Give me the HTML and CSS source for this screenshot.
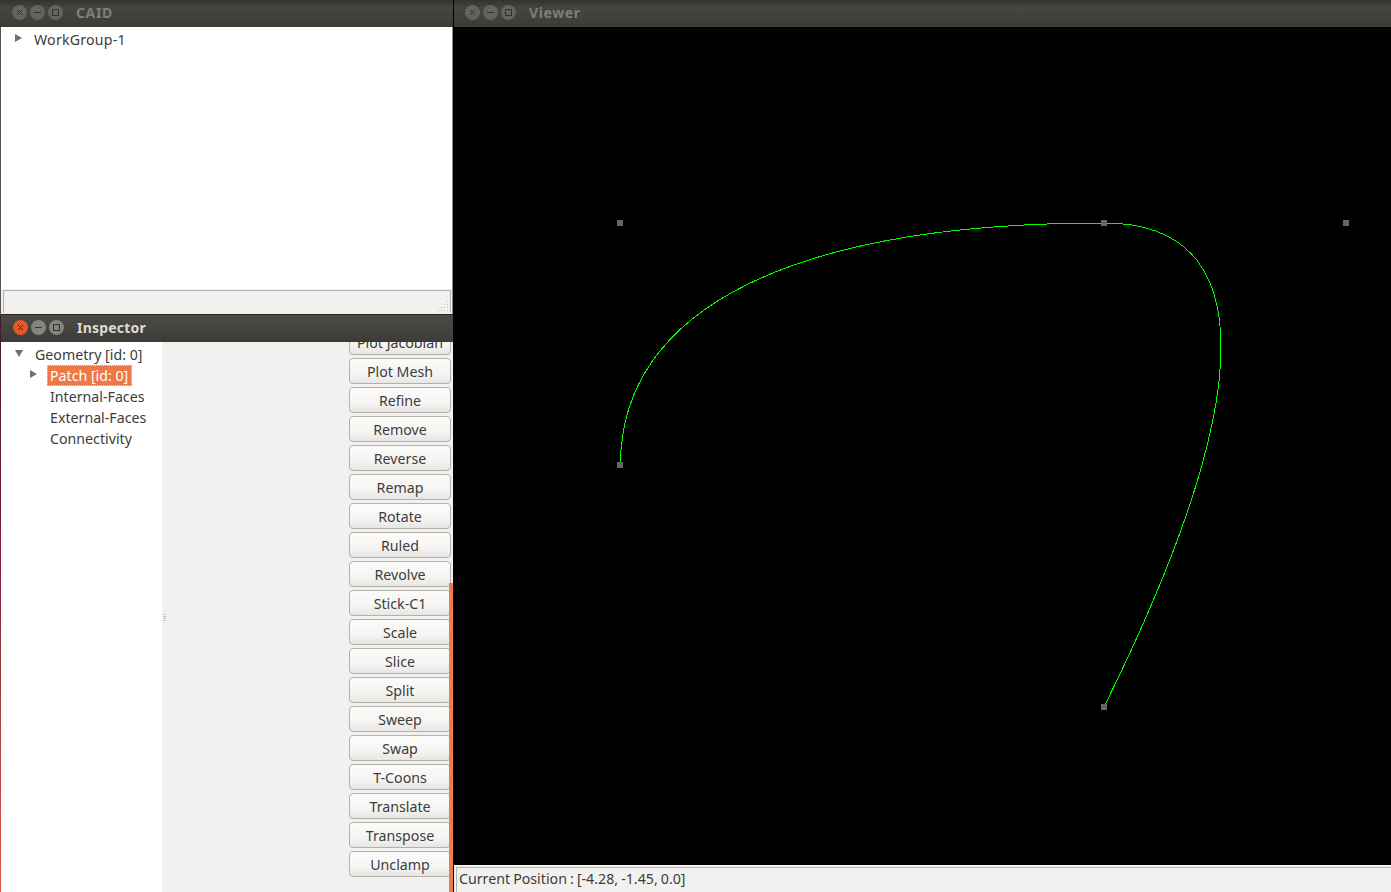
FILE: index.html
```html
<!DOCTYPE html>
<html>
<head>
    <title>CAID</title>
    <link rel="stylesheet" href="styles.css">
</head>
<body>
    <div class="window caid-window">
        <div class="titlebar">
            <div class="win-buttons">
                <svg class="win-btn" viewBox="0 0 15 15"><circle cx="7.5" cy="7.5" r="7.5"/><path d="M5 5l5 5M10 5l-5 5"/></svg>
                <svg class="win-btn" viewBox="0 0 15 15"><circle cx="7.5" cy="7.5" r="7.5"/><path d="M4 7.5h7"/></svg>
                <svg class="win-btn" viewBox="0 0 15 15"><circle cx="7.5" cy="7.5" r="7.5"/><rect x="4.5" y="4.5" width="6" height="6"/></svg>
            </div>
            <span class="win-title">CAID</span>
        </div>
        <div class="tree workspace-tree">
            <div class="tree-row"><span class="arrow closed"></span><span class="label">WorkGroup-1</span></div>
        </div>
        <div class="status-strip">
            <div class="status-field"></div>
            <svg class="grip" viewBox="0 0 12 12"><path d="M10 1h1v1h-1zM10 4h1v1h-1zM7 4h1v1h-1zM10 7h1v1h-1zM7 7h1v1h-1zM4 7h1v1h-1zM10 10h1v1h-1zM7 10h1v1h-1zM4 10h1v1h-1zM1 10h1v1h-1z"/></svg>
        </div>
    </div>

    <div class="window inspector-window active">
        <div class="titlebar">
            <div class="win-buttons">
                <svg class="win-btn close" viewBox="0 0 15 15"><circle cx="7.5" cy="7.5" r="7.5"/><path d="M5 5l5 5M10 5l-5 5"/></svg>
                <svg class="win-btn" viewBox="0 0 15 15"><circle cx="7.5" cy="7.5" r="7.5"/><path d="M4 7.5h7"/></svg>
                <svg class="win-btn" viewBox="0 0 15 15"><circle cx="7.5" cy="7.5" r="7.5"/><rect x="4.5" y="4.5" width="6" height="6"/></svg>
            </div>
            <span class="win-title">Inspector</span>
        </div>
        <div class="inspector-body">
            <div class="tree inspector-tree">
                <div class="tree-row"><span class="arrow open"></span><span class="label">Geometry [id: 0]</span></div>
                <div class="tree-row indent"><span class="arrow closed"></span><span class="label selected">Patch [id: 0]</span></div>
                <div class="tree-row leaf"><span class="label">Internal-Faces</span></div>
                <div class="tree-row leaf"><span class="label">External-Faces</span></div>
                <div class="tree-row leaf"><span class="label">Connectivity</span></div>
            </div>
            <div class="splitter"><span></span></div>
            <div class="actions">
                <div class="button-list">
                    <button>Plot Jacobian</button>
                    <button>Plot Mesh</button>
                    <button>Refine</button>
                    <button>Remove</button>
                    <button>Reverse</button>
                    <button>Remap</button>
                    <button>Rotate</button>
                    <button>Ruled</button>
                    <button>Revolve</button>
                    <button>Stick-C1</button>
                    <button>Scale</button>
                    <button>Slice</button>
                    <button>Split</button>
                    <button>Sweep</button>
                    <button>Swap</button>
                    <button>T-Coons</button>
                    <button>Translate</button>
                    <button>Transpose</button>
                    <button>Unclamp</button>
                </div>
            </div>
            <div class="edge-strip"></div>
        </div>
    </div>

    <div class="window viewer-window">
        <div class="titlebar">
            <div class="win-buttons">
                <svg class="win-btn" viewBox="0 0 15 15"><circle cx="7.5" cy="7.5" r="7.5"/><path d="M5 5l5 5M10 5l-5 5"/></svg>
                <svg class="win-btn" viewBox="0 0 15 15"><circle cx="7.5" cy="7.5" r="7.5"/><path d="M4 7.5h7"/></svg>
                <svg class="win-btn" viewBox="0 0 15 15"><circle cx="7.5" cy="7.5" r="7.5"/><rect x="4.5" y="4.5" width="6" height="6"/></svg>
            </div>
            <span class="win-title">Viewer</span>
        </div>
        <div class="canvas">
            <svg class="plot" viewBox="454 27 937 838">
                <path class="curve" d="M620.5 465 C620.5 309 792 223 1104 223 C1260 223 1260 392 1104 707"/>
                <rect class="ctrl" x="617" y="462" width="6" height="6"/>
                <rect class="ctrl" x="617" y="220" width="6" height="6"/>
                <rect class="ctrl" x="1101" y="220" width="6" height="6"/>
                <rect class="ctrl" x="1343" y="220" width="6" height="6"/>
                <rect class="ctrl" x="1101" y="704" width="6" height="6"/>
            </svg>
        </div>
        <div class="viewer-status">
            <div class="position">Current Position : [-4.28, -1.45, 0.0]</div>
        </div>
    </div>
</body>
</html>
```

FILE: styles.css
```css
html, body {
    margin: 0;
    padding: 0;
    height: 100%;
    overflow: hidden;
}

body {
    position: relative;
    background: linear-gradient(#3c1a30 35%, #7a1f3a 60%, #dc5a48);
    font-family: "Noto Sans", "Open Sans", sans-serif;
    font-size: 14.2px;
    color: #3c3c3c;
}

.window {
    position: absolute;
    display: flex;
    flex-direction: column;
    box-sizing: border-box;
}

.caid-window {
    left: 0;
    top: 0;
    width: 453px;
    height: 315px;
    border-left: 1px solid #555;
    border-right: 1px solid #8a8984;
}

.inspector-window {
    left: 1px;
    top: 314px;
    width: 452px;
    height: 578px;
    background: #f2f1f0;
}

.viewer-window {
    left: 453px;
    top: 0;
    width: 938px;
    height: 892px;
    border-left: 1px solid #000;
}

.titlebar {
    flex: none;
    display: flex;
    align-items: center;
    height: 27px;
    box-sizing: border-box;
    padding-bottom: 2px;
    background: linear-gradient(#33322e, #464540 30%, #3c3b37);
}

.caid-window .titlebar {
    margin: 0 -1px;
    padding-left: 12px;
}

.viewer-window .titlebar {
    padding-left: 11px;
}

.inspector-window .titlebar {
    height: 28px;
    padding-left: 12px;
    border-top: 1px solid #26251f;
    background: linear-gradient(#4c4b46, #3c3b37);
}

.win-buttons {
    display: flex;
    gap: 3px;
}

.win-btn {
    width: 15px;
    height: 15px;
    display: block;
}

.win-btn circle {
    fill: #64635e;
}

.win-btn path, .win-btn rect {
    fill: none;
    stroke: #33322d;
    stroke-width: 1;
}

.active .win-btn circle {
    fill: #85847f;
}

.active .win-btn.close circle {
    fill: #e2572b;
}

.active .win-btn.close path {
    stroke: #5a1e0c;
}

.win-title {
    margin-left: 13px;
    font-weight: bold;
    font-size: 14px;
    letter-spacing: 0.6px;
    color: #7f7e79;
}

.active .win-title {
    letter-spacing: 0.2px;
    color: #dfdbd2;
}

.tree {
    background: #fff;
}

.workspace-tree {
    flex: 1;
    padding-top: 2px;
}

.tree-row {
    display: flex;
    align-items: center;
    height: 21px;
    position: relative;
}

.arrow {
    position: absolute;
    width: 0;
    height: 0;
}

.arrow.closed {
    top: 5px;
    border-top: 4px solid transparent;
    border-bottom: 4px solid transparent;
    border-left: 7px solid #6f6f6f;
}

.arrow.open {
    top: 6px;
    border-left: 4px solid transparent;
    border-right: 4px solid transparent;
    border-top: 7px solid #6f6f6f;
}

.workspace-tree .arrow {
    left: 14px;
}

.workspace-tree .label {
    margin-left: 33px;
    letter-spacing: 0.2px;
}

.status-strip {
    flex: none;
    height: 26px;
    position: relative;
    background: #f2f1f0;
    padding: 1px 1px 2px 2px;
    box-sizing: border-box;
}

.status-field {
    height: 100%;
    box-sizing: border-box;
    border: 1px solid #b5b2ac;
    border-bottom-color: #f2f1f0;
}

.grip {
    position: absolute;
    right: 3px;
    bottom: 3px;
    width: 12px;
    height: 12px;
    fill: #c4c1ba;
}

.inspector-body {
    flex: 1;
    min-height: 0;
    display: flex;
    position: relative;
}

.inspector-tree {
    flex: none;
    width: 161px;
    padding-top: 2px;
}

.inspector-tree .open {
    left: 14px;
}

.inspector-tree .tree-row {
    padding-left: 34px;
}

.inspector-tree .indent .arrow {
    left: 29px;
}

.inspector-tree .indent, .inspector-tree .leaf {
    padding-left: 49px;
}

.label.selected {
    margin-left: -3px;
    padding: 0 4px 0 3px;
    height: 21px;
    line-height: 21px;
    box-sizing: border-box;
    background: #f07746;
    color: #fff;
    outline: 1px dotted #fbd3c0;
    outline-offset: -1px;
}

.splitter {
    flex: none;
    width: 4px;
    display: flex;
    align-items: center;
    justify-content: center;
    padding-top: 1px;
}

.splitter span {
    width: 3px;
    height: 7px;
    background: repeating-linear-gradient(#c8c5be 0 1px, transparent 1px 2px);
}

.actions {
    flex: 1;
    min-width: 0;
    overflow: hidden;
    display: flex;
    justify-content: flex-end;
    padding-right: 2px;
}

.button-list {
    display: flex;
    flex-direction: column;
    gap: 3px;
    width: 102px;
    margin-top: -13px;
}

.button-list button {
    flex: none;
    height: 26px;
    padding: 0;
    border: 1px solid #b4b1aa;
    border-radius: 4px;
    background: linear-gradient(#fbfbfa, #f6f5f4 60%, #e8e6e3);
    font-family: inherit;
    font-size: 14.2px;
    color: #3c3c3c;
}

/* orange wallpaper showing past the clipped buttons */
.edge-strip {
    position: absolute;
    right: 0;
    top: 241px;
    bottom: 0;
    width: 4px;
    background: #ef7b4d;
}

.canvas {
    flex: 1;
    min-height: 0;
    background: #000;
}

.plot {
    display: block;
    width: 100%;
    height: 100%;
}

.curve {
    fill: none;
    stroke: #00ff00;
    stroke-width: 1;
    shape-rendering: crispEdges;
}

.ctrl {
    fill: #666;
}

.viewer-status {
    flex: none;
    height: 27px;
    box-sizing: border-box;
    padding: 2px 0 0 2px;
    background: #f2f1f0;
}

.position {
    height: 100%;
    box-sizing: border-box;
    border: 1px solid #b5b2ac;
    border-bottom: 0;
    border-right: 0;
    padding: 1px 0 0 2px;
    line-height: 20px;
    word-spacing: -0.6px;
}
```
